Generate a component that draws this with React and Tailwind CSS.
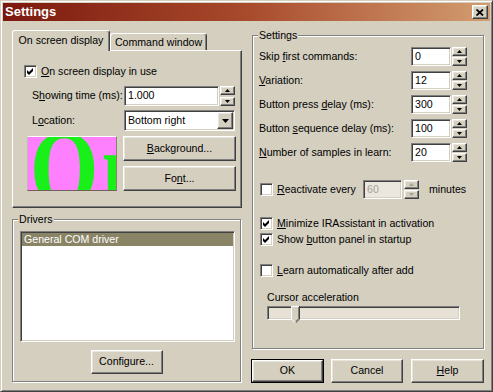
import React from 'react';

const raised =
  'border border-t-white border-l-white border-b-[#404040] border-r-[#404040] shadow-[inset_-1px_-1px_0_#808080,inset_1px_1px_0_#e9e5dc]';
const sunken =
  'border border-t-[#808080] border-l-[#808080] border-b-white border-r-white shadow-[inset_1px_1px_0_#404040,inset_-1px_-1px_0_#d4cfbf]';

function Button({ children, className = '', isDefault = false }) {
  if (isDefault) {
    return (
      <div className={`border border-black ${className}`}>
        <div className={`flex h-full w-full items-center justify-center bg-[#d4cfbf] ${raised}`}>{children}</div>
      </div>
    );
  }
  return (
    <div className={`flex items-center justify-center bg-[#d4cfbf] ${raised} ${className}`}>{children}</div>
  );
}

function Spin({ disabled = false, className = '' }) {
  const c = disabled ? '#a5a194' : '#000';
  return (
    <div className={`flex w-[15px] flex-col justify-between ${className}`}>
      <div className={`flex h-[9px] items-center justify-center bg-[#d4cfbf] ${raised}`}>
        <svg width="5" height="3" className="block">
          <polygon points="2.5,0 5,3 0,3" fill={c} />
        </svg>
      </div>
      <div className={`flex h-[9px] items-center justify-center bg-[#d4cfbf] ${raised}`}>
        <svg width="5" height="3" className="block">
          <polygon points="0,0 5,0 2.5,3" fill={c} />
        </svg>
      </div>
    </div>
  );
}

function Check({ checked = false }) {
  return (
    <div className={`h-[13px] w-[13px] shrink-0 bg-white ${sunken}`}>
      {checked && (
        <svg width="11" height="11" className="block">
          <path d="M2 4L4 6L8 2V5L4 9L2 7Z" fill="#000" />
        </svg>
      )}
    </div>
  );
}

function Group({ label, className = '', children }) {
  return (
    <div className={`relative border border-[#808080] shadow-[inset_1px_1px_0_#fff,1px_1px_0_#fff] ${className}`}>
      <span className="absolute left-[5px] top-[-8px] bg-[#d4cfbf] px-[1px] leading-[14px]">{label}</span>
      {children}
    </div>
  );
}

function NumRow({ label, value, className = '' }) {
  return (
    <div className={`flex h-[19px] items-center ${className}`}>
      <span className="w-[158px] pl-[6px]">{label}</span>
      <div className={`flex h-[19px] w-[40px] items-center bg-white pl-[3px] ${sunken}`}>{value}</div>
      <Spin className="ml-[1px] h-[19px]" />
    </div>
  );
}

function CheckRow({ checked, children, className = '' }) {
  return (
    <div className={`flex h-[13px] items-center gap-[4px] pl-[7px] ${className}`}>
      <Check checked={checked} />
      <span>{children}</span>
    </div>
  );
}

export default function App() {
  return (
    <div className="h-[392px] w-[493px] whitespace-nowrap bg-[#d4cfbf] font-['Liberation_Sans',Arial,sans-serif] text-[10.6px] text-black">
      <div className="h-full w-full border border-t-[#d4cfbf] border-l-[#d4cfbf] border-b-[#404040] border-r-[#404040] p-[2px] shadow-[inset_1px_1px_0_#fff,inset_-1px_-1px_0_#808080]">
        {/* title bar */}
        <div className="flex h-[18px] items-center bg-linear-to-r from-[#7c170e] via-[#a84a2c] to-[#d29d70] pl-[2px] pr-[2px]">
          <span className="flex-1 text-[13px] font-bold text-white">Settings</span>
          <div className={`flex h-[14px] w-[16px] items-center justify-center bg-[#d4cfbf] ${raised}`}>
            <svg width="8" height="7" className="block">
              <path d="M0.5 0.5L7 6.5M7 0.5L0.5 6.5" stroke="#000" strokeWidth="1.8" />
            </svg>
          </div>
        </div>

        <div className="flex gap-[10px] pl-[9px] pt-[9px]">
          {/* left column */}
          <div className="flex w-[230px] flex-col">
            <div className="flex h-[20px] items-end">
              <div className="relative z-10 -mb-px flex h-[21px] w-[98px] justify-center rounded-t-[3px] border-l border-r border-t border-l-white border-r-[#404040] border-t-white bg-[#d4cfbf] pt-[3px] leading-[13px] shadow-[inset_-1px_0_0_#808080]">
                On screen display
              </div>
              <div className="flex h-[17px] w-[97px] justify-center rounded-t-[3px] border-l border-r border-t border-l-white border-r-[#404040] border-t-white pt-[2px] leading-[13px] shadow-[inset_-1px_0_0_#808080]">
                Command window
              </div>
            </div>
            <div className="h-[158px] border border-t-white border-l-white border-b-[#404040] border-r-[#404040] pl-[11px] pt-[14px] shadow-[inset_-1px_-1px_0_#808080]">
              <div className="flex h-[13px] items-center gap-[4px]">
                <Check checked />
                <span>
                  <u>O</u>n screen display in use
                </span>
              </div>
              <div className="mt-[8px] flex h-[20px] items-center">
                <span className="w-[100px] pl-[8px]">
                  S<u>h</u>owing time (ms):
                </span>
                <div className={`flex h-[20px] w-[95px] items-center bg-white pl-[3px] ${sunken}`}>1.000</div>
                <Spin className="ml-[1px] h-[20px]" />
              </div>
              <div className="mt-[4px] flex h-[21px] items-center">
                <span className="w-[100px] pl-[8px]">
                  L<u>o</u>cation:
                </span>
                <div className={`flex h-[21px] w-[111px] items-center bg-white p-[1px] ${sunken}`}>
                  <span className="flex-1 pl-[2px]">Bottom right</span>
                  <div className={`flex h-[17px] w-[16px] items-center justify-center bg-[#d4cfbf] ${raised}`}>
                    <svg width="7" height="4" className="block">
                      <polygon points="0,0 7,0 3.5,4" fill="#000" />
                    </svg>
                  </div>
                </div>
              </div>
              <div className="mt-[5px] flex">
                <div className="ml-[3px] h-[55px] w-[90px] overflow-hidden border border-t-white border-l-[#c8b4c8] border-b-[#6e6258] border-r-[#8c8070] bg-[#ff80ff]">
                  <div className="mt-[-21px] origin-top scale-y-[1.22] pl-[2px] font-['Liberation_Serif',serif] text-[88px] font-bold leading-[88px] tracking-[3px] text-[#19f019]">
                    On screen
                  </div>
                </div>
                <div className="ml-[6px] flex flex-col gap-[5px]">
                  <Button className="h-[25px] w-[113px]">
                    <span>
                      <u>B</u>ackground...
                    </span>
                  </Button>
                  <Button className="h-[25px] w-[113px]">
                    <span>
                      Fo<u>n</u>t...
                    </span>
                  </Button>
                </div>
              </div>
            </div>

            <Group label="Drivers" className="mt-[11px] h-[163px] w-[229px]">
              <div className={`ml-[7px] mt-[11px] h-[111px] w-[215px] bg-white p-[1px] ${sunken}`}>
                <div className="h-[13px] bg-[#8a8466] pl-[2px] leading-[13px] text-white">General COM driver</div>
              </div>
              <Button className="mx-auto mt-[8px] h-[24px] w-[72px]">Configure...</Button>
            </Group>
          </div>

          {/* right column */}
          <div className="flex w-[232px] flex-col">
            <Group label="Settings" className="mt-[5px] h-[314px]">
              <div className="flex flex-col pt-[11px]">
                <NumRow
                  value="0"
                  label={
                    <>
                      Skip <u>f</u>irst commands:
                    </>
                  }
                />
                <NumRow
                  className="mt-[5px]"
                  value="12"
                  label={
                    <>
                      <u>V</u>ariation:
                    </>
                  }
                />
                <NumRow
                  className="mt-[5px]"
                  value="300"
                  label={
                    <>
                      Button press <u>d</u>elay (ms):
                    </>
                  }
                />
                <NumRow
                  className="mt-[5px]"
                  value="100"
                  label={
                    <>
                      Button <u>s</u>equence delay (ms):
                    </>
                  }
                />
                <NumRow
                  className="mt-[5px]"
                  value="20"
                  label={
                    <>
                      <u>N</u>umber of samples in learn:
                    </>
                  }
                />

                <div className="mt-[18px] flex h-[19px] items-center pl-[7px]">
                  <Check />
                  <span className="ml-[4px] w-[86px]">
                    <u>R</u>eactivate every
                  </span>
                  <div className={`flex h-[19px] w-[39px] items-center bg-[#ebe7df] pl-[3px] text-[#a5a194] ${sunken}`}>60</div>
                  <Spin disabled className="ml-[2px] h-[19px]" />
                  <span className="ml-[10px]">minutes</span>
                </div>

                <CheckRow checked className="mt-[18px]">
                  <u>M</u>inimize IRAssistant in activation
                </CheckRow>
                <CheckRow checked className="mt-[3px]">
                  Show <u>b</u>utton panel in startup
                </CheckRow>
                <CheckRow className="mt-[18px]">
                  <u>L</u>earn automatically after add
                </CheckRow>

                <div className="mt-[14px] pl-[14px] leading-[13px]">Cursor acceleration</div>
                <div className="relative ml-[14px] mt-[2px] h-[18px] w-[193px]">
                  <div className={`h-[14px] w-full bg-[#e6e1d4] ${sunken}`} />
                  <svg width="9" height="18" className="absolute left-[24px] top-0 block">
                    <path d="M0 0H9V13L4.5 17.5L0 13Z" fill="#d4cfbf" />
                    <path d="M0.5 13V0.5H8" stroke="#fff" fill="none" />
                    <path d="M8.5 0V13L4.5 17" stroke="#404040" fill="none" />
                    <path d="M7.5 1V12.5L4.5 15.5" stroke="#808080" fill="none" />
                    <path d="M0.5 13L4.5 17" stroke="#fff" fill="none" />
                  </svg>
                </div>
              </div>
            </Group>

            <div className="mt-[10px] flex">
              <Button isDefault className="-ml-px h-[24px] w-[73px]">
                OK
              </Button>
              <Button className="ml-[7px] h-[24px] w-[72px]">Cancel</Button>
              <Button className="ml-[8px] h-[24px] w-[73px]">
                <span>
                  <u>H</u>elp
                </span>
              </Button>
            </div>
          </div>
        </div>
      </div>
    </div>
  );
}
